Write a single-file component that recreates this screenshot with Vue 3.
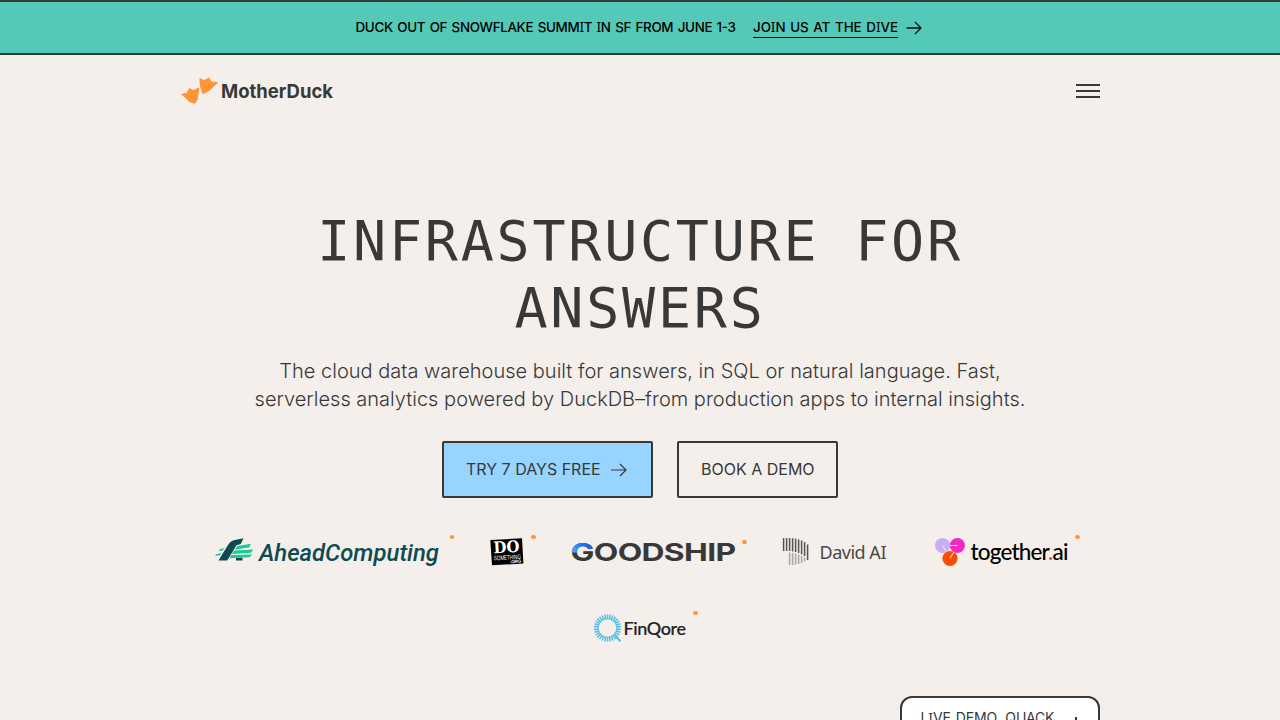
<script setup>
const rays = Array.from({ length: 30 }, (_, i) => i * 12)
const bars = [0, 1, 2, 3, 4, 5, 6, 7, 8]
const barTop = [538, 538, 538, 538.2, 538.6, 539.4, 540.4, 542, 544.5]
const barEnd = [551, 551, 551, 551.4, 552, 553, 554.4, 556, 560]
</script>

<template>
  <div class="page">
    <div class="banner">
      <svg width="382" height="20" class="bt"><text x="0.5" y="14.2" textLength="380.5">DUCK OUT OF SNOWFLAKE SUMM<tspan>I</tspan>T <tspan>I</tspan>N SF FROM JUNE 1-3</text></svg>
      <a class="b2"><svg width="146" height="19" class="bt"><text x="0" y="14.2" textLength="145">JO<tspan>I</tspan>N US AT THE D<tspan>I</tspan>VE</text></svg></a>
      <svg class="barrow" width="16" height="14" viewBox="0 0 16 14"><path d="M0.5 7H15M9 1L15 7L9 13" /></svg>
    </div>

    <header>
      <svg width="156" height="30" viewBox="180 75 156 30">
        <g fill="#ff9538" stroke="#ff9538" stroke-width="1.2" stroke-linejoin="round">
          <path d="M200 78.8L204.6 80.8L208.8 78.2L211.3 82L217.2 82.6L213.3 86.3L209 90.2L203.2 93.6L201.4 89L200.4 84.6Z" />
          <path d="M181.9 94.6L187.4 93.1L189.4 88.8L193.2 90.9L198.6 88.3L197.9 93.8L197.2 99L194.6 103.3L189.3 101.2L186 97.6Z" />
        </g>
        <text x="221" y="98" class="md" textLength="112" lengthAdjust="spacingAndGlyphs">MotherDuck</text>
      </svg>
      <svg width="24" height="16" viewBox="0 0 24 16" class="menu"><path d="M0 2H24M0 8H24M0 14H24" /></svg>
    </header>

    <main>
      <h1><span>INFRASTRUCTURE FOR</span><span>ANSWERS</span></h1>
      <p class="sub">
        The cloud data warehouse built for answers, in SQL or natural language. Fast,<br>
        serverless analytics powered by DuckDB–from production apps to internal insights.
      </p>
      <div class="actions">
        <a class="btn primary">
          <span>TRY 7 DAYS FREE</span>
          <svg width="16" height="14" viewBox="0 0 16 14"><path d="M0 7H15M9 1L15 7L9 13" /></svg>
        </a>
        <a class="btn"><span>BOOK A DEMO</span></a>
      </div>

      <div class="logos">
        <svg width="242" height="44" viewBox="214 530 242 44">
          <path fill="#0d4b50" d="M218.5 560.5L228 545Q230 541.4 233.5 540.2L243.5 538.2L240.8 544L236.5 545.3L227.2 560.5ZM236 558L242.5 557.6V560.5H236Z" />
          <g fill="#1fca92">
            <path d="M219.8 549L224.2 548.3L222.8 550.4L218.8 550.9ZM216.2 554.2L221.3 553L220 555.2L215 556Z" />
            <path d="M237.5 546L251 543.7L249 547.4L234.7 549.6ZM234.2 550.6L253.3 549.6L251 552.8L231.8 554.1ZM231.2 555L252.5 554.6L249.5 557.3L229.6 558.2Z" />
          </g>
          <text x="259" y="560.5" class="ahead" textLength="180" lengthAdjust="spacingAndGlyphs">AheadComputing</text>
          <circle cx="452" cy="537" r="2.1" class="dot" />
        </svg>
        <svg width="47" height="44" viewBox="490 530 47 44">
          <path d="M490.3 540L522 538.2L523.4 563.6L492 565.3Z" />
          <g transform="rotate(-3 507 551)" fill="#fff" text-anchor="middle">
            <text x="506.7" y="552.6" class="do" textLength="26" lengthAdjust="spacingAndGlyphs">DO</text>
            <text x="507" y="559.6" class="som" textLength="27" lengthAdjust="spacingAndGlyphs">SOMETHING</text>
            <text x="515" y="563.4" class="org">.ORG</text>
          </g>
          <ellipse cx="533.5" cy="537" rx="2.6" ry="2.1" class="dot" />
        </svg>
        <svg width="177" height="44" viewBox="571 530 177 44">
          <defs>
            <linearGradient id="gs" gradientUnits="userSpaceOnUse" x1="571" y1="552" x2="592" y2="544">
              <stop offset="0" stop-color="#55b7f5" /><stop offset="0.5" stop-color="#2277f2" /><stop offset="1" stop-color="#2459e8" />
            </linearGradient>
            <clipPath id="gt"><path d="M571 540H595V549H583V552.5H571Z" /></clipPath>
          </defs>
          <text x="570.5" y="561" class="good" textLength="165" lengthAdjust="spacingAndGlyphs">GOODSHIP</text>
          <text x="570.5" y="561" class="good" fill="url(#gs)" clip-path="url(#gt)" textLength="165" lengthAdjust="spacingAndGlyphs" aria-hidden="true">GOODSHIP</text>
          <circle cx="744.5" cy="542" r="2.3" class="dot" />
        </svg>
        <svg width="118" height="44" viewBox="782 530 118 44">
          <g stroke-width="1.5">
            <path v-for="i in bars" :key="i" :d="`M${783.6 + i * 3} ${barTop[i]}V${barEnd[i]}`" stroke="#55524f" />
            <path v-for="i in [2, 3, 4, 5, 6, 7]" :key="'l' + i" :d="`M${783.6 + i * 3} ${barEnd[i] + 1.5}V${[0, 0, 565, 565, 564.5, 564, 563, 561.5][i]}`" stroke="#aaa6a2" />
          </g>
          <text x="819.5" y="558.5" class="david" textLength="67">David AI</text>
        </svg>
        <svg width="147" height="44" viewBox="934 530 147 44">
          <circle cx="942.6" cy="545.5" r="7.6" fill="#c8aef3" />
          <circle cx="957.4" cy="545.5" r="7.6" fill="#ef2cc1" />
          <circle cx="950" cy="558.5" r="7.6" fill="#fc4c02" />
          <path d="M942.6 545.5L946.2 551.6M949.8 545.5H957.4M950 558.5L953.8 552" stroke="#f9e8f5" stroke-width="1" />
          <text x="970.5" y="559.7" class="tog" textLength="98">together<tspan fill="#fc4c02">.</tspan>ai</text>
          <ellipse cx="1077.5" cy="537" rx="2.5" ry="2.1" class="dot" />
        </svg>
      </div>
      <div class="logos second">
        <svg width="108" height="40" viewBox="592 608 108 40">
          <g transform="translate(607.5 628)" stroke="#55bde5" stroke-width="1.5">
            <path v-for="r in rays" :key="r" d="M0 -8.7V-13.7" :transform="`rotate(${r})`" />
            <circle r="9.4" fill="none" stroke-width="1.2" opacity=".6" />
            <path d="M8 8L13 13.4" stroke-width="2" />
          </g>
          <text x="623.5" y="634.5" class="fin" textLength="62.5">FinQore</text>
          <ellipse cx="695.5" cy="613" rx="2.5" ry="2.1" class="dot" />
        </svg>
      </div>
    </main>

    <aside class="demo">
      <svg width="140" height="24" class="bt"><text x="0.5" y="14.5" textLength="134">L<tspan>I</tspan>VE DEMO, QUACK</text></svg>
      <i></i>
    </aside>
  </div>
</template>

<style>
html, body { margin: 0; background: #f4efea; overflow: hidden; }
</style>

<style scoped>
.page { position: relative; width: 1280px; height: 720px; overflow: hidden; background: #f4efea; color: #383838; font-family: Inter, sans-serif; box-sizing: border-box; }
.banner { box-sizing: border-box; height: 55px; border-top: 2px solid #383838; border-bottom: 2px solid #383838; background: #53c9b7; display: flex; padding: 16px 0 0 355px; color: #000; }
svg { display: block; flex: none; }
.bt text { font: 450 13.4px Inter, sans-serif; fill: #000; word-spacing: 1.2px; }
.bt tspan { font-family: "Noto Sans", sans-serif; font-size: 13.7px; }
.b2 { box-sizing: border-box; width: 145px; height: 20px; margin-left: 16px; border-bottom: 1px solid #000; }
.barrow { margin: 3px 0 0 8px; fill: none; stroke: #111; stroke-width: 1.3; }
header { height: 71px; padding: 20px 180px 0; box-sizing: border-box; display: flex; justify-content: space-between; }
.md { font: 650 18.7px Inter, sans-serif; fill: #383838; }
.menu { stroke: #383838; stroke-width: 2; margin-top: 7.5px; }
main { display: flex; flex-direction: column; align-items: center; }
h1 { margin: 82px 0 0; font: 400 55px/67px "DejaVu Sans Mono", monospace; letter-spacing: 2.75px; display: flex; flex-direction: column; align-items: center; }
.sub { margin: 15px 0 0; font-size: 20px; line-height: 28px; font-weight: 300; letter-spacing: .01px; text-align: center; white-space: nowrap; }
.actions { display: flex; gap: 24px; margin-top: 28px; }
.btn { box-sizing: border-box; height: 57px; width: 161px; padding: 0 0 1px 22px; border: 2px solid #383838; border-radius: 2px; display: flex; align-items: center; font-size: 16px; white-space: nowrap; }
.primary { width: 211px; background: #97d4ff; }
.btn span { width: 145px; flex: none; }
.btn svg { fill: none; stroke: #383838; stroke-width: 1.2; margin-top: 2px; }
.logos { display: flex; gap: 34px; width: 1280px; padding-left: 214px; margin-top: 32px; box-sizing: border-box; }
.second { padding-left: 592px; margin-top: 34px; }
.dot { fill: #ff9538; }
.ahead { font: italic 500 23px Roboto, sans-serif; fill: #0d4b50; }
.do { font: 700 16px "DejaVu Serif", serif; }
.som { font: 400 6.5px "Liberation Sans", sans-serif; }
.org { font: 700 4.5px "Liberation Sans", sans-serif; }
.good { font: 700 24.7px Inter, sans-serif; letter-spacing: -.5px; }
.good:not([fill]) { fill: #383838; }
.david { font: 400 18px "Noto Sans", sans-serif; fill: #4b4845; }
.tog { font: 500 22.5px Lato, sans-serif; }
.fin { font: 500 18px Lato, sans-serif; fill: #222; stroke: #222; stroke-width: .2; }
.demo { position: absolute; left: 900px; top: 696px; width: 200px; height: 60px; box-sizing: border-box; border: 2px solid #383838; border-radius: 12px; background: #fff; padding: 10px 18px; display: flex; }
.demo .bt text { font-weight: 400; font-size: 14px; fill: #383838; }
.demo .bt tspan { font-size: 14.2px; }
.demo i { position: absolute; left: 173px; top: 19px; width: 2px; height: 12px; background: #383838; }
</style>
